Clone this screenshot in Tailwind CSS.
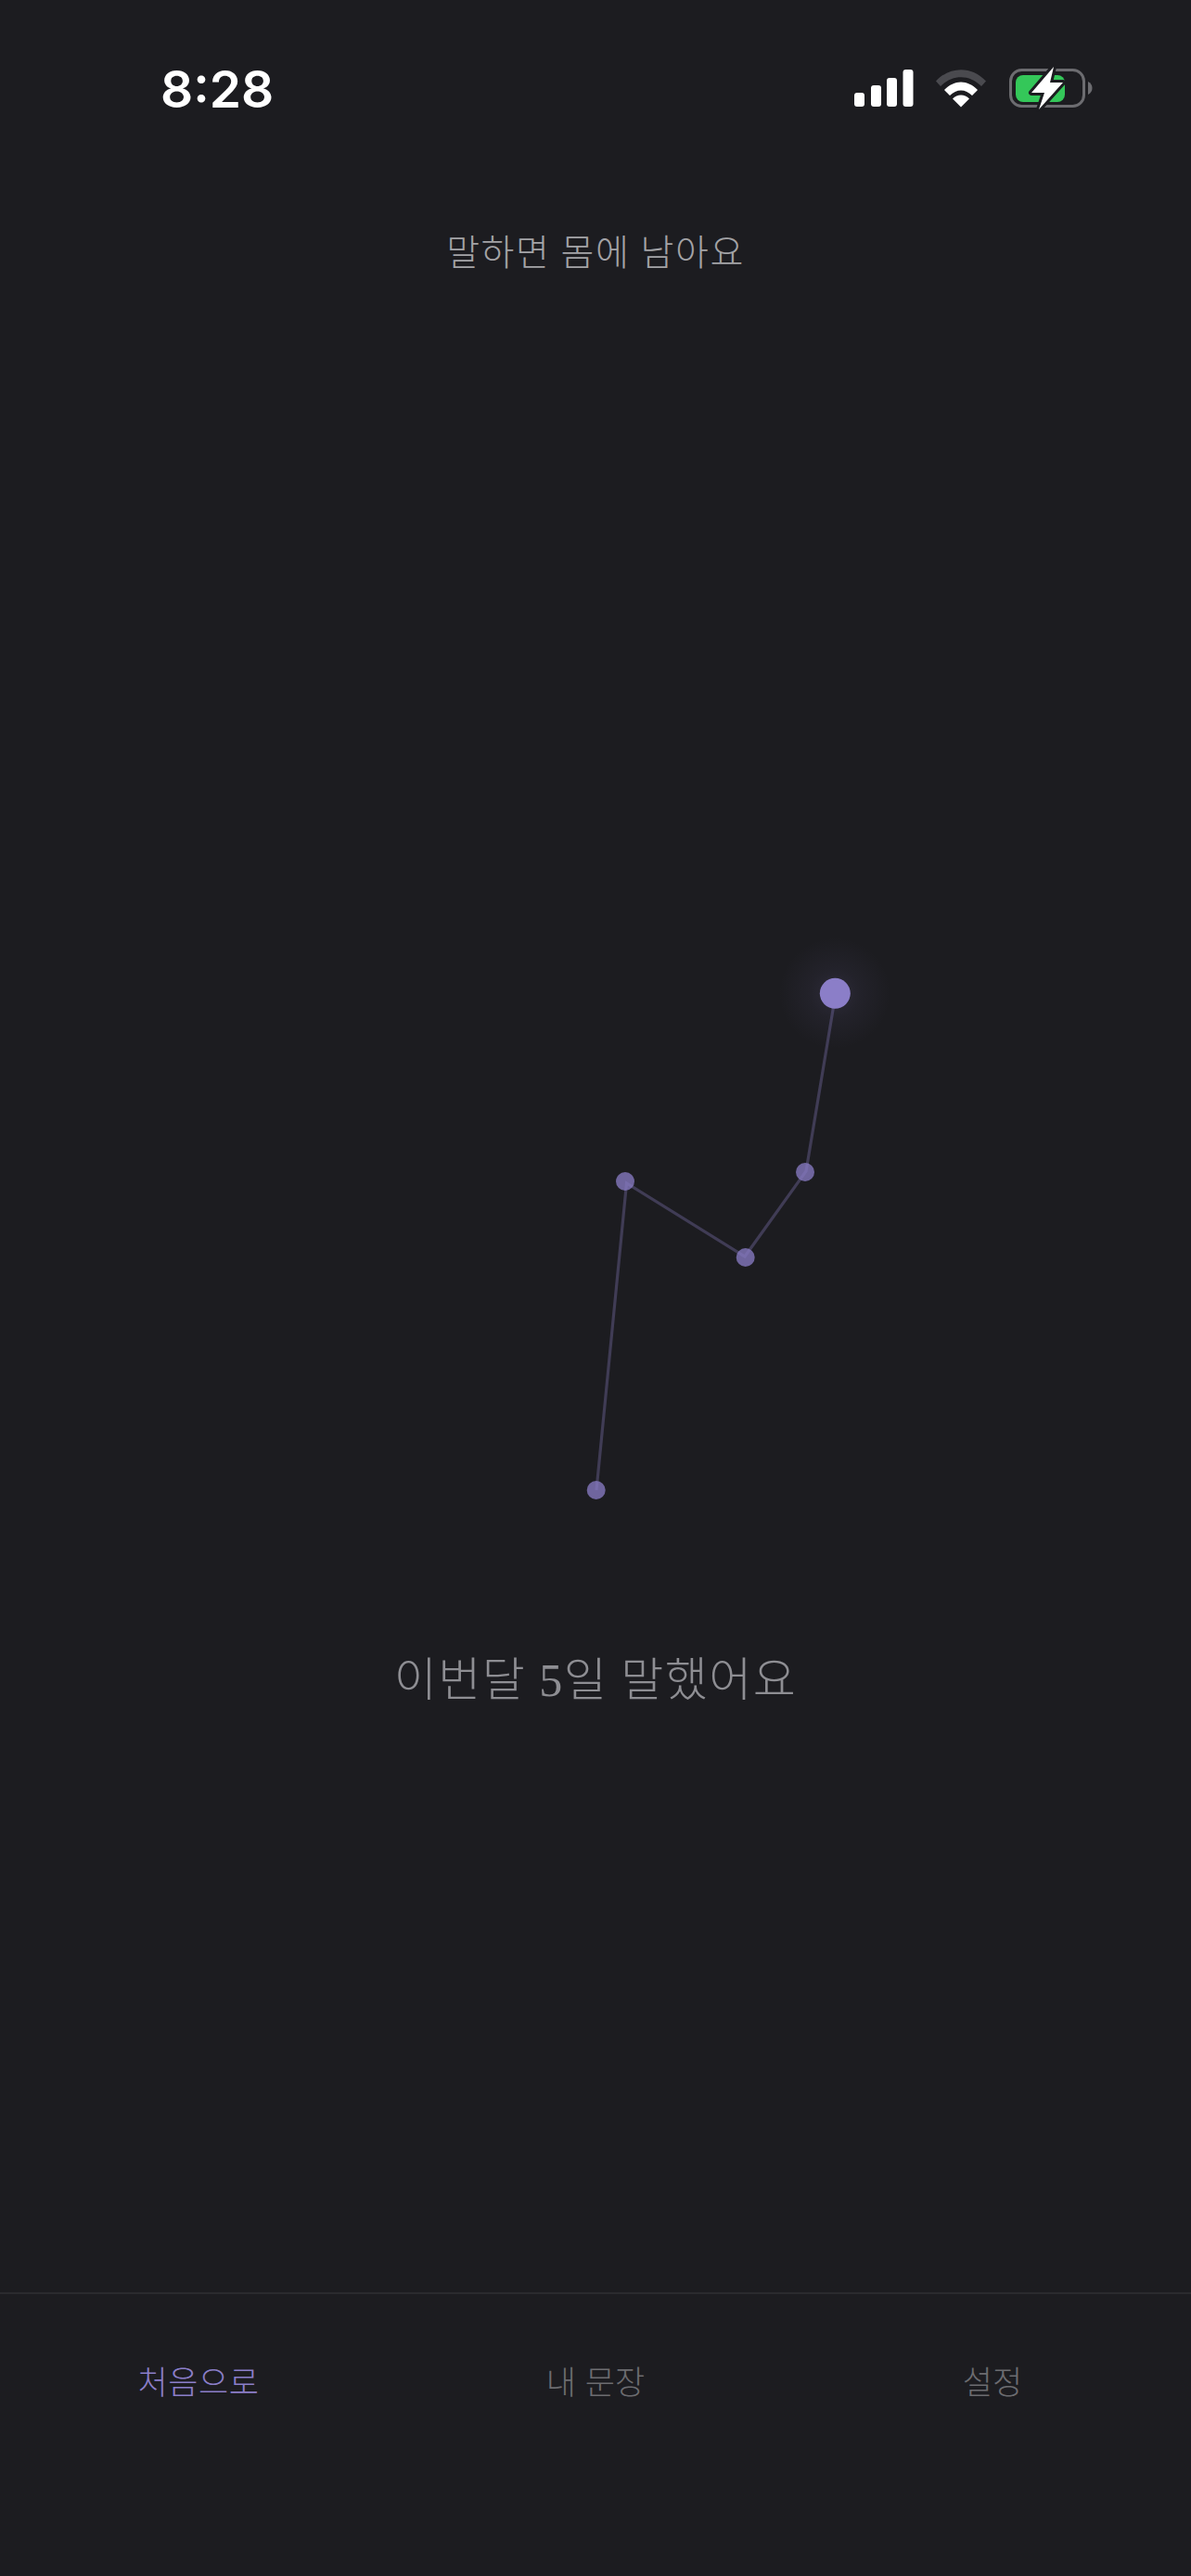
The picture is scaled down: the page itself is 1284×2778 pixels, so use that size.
<!DOCTYPE html>
<html lang="ko">
<head>
  <meta charset="UTF-8">
  <title>말하면 몸에 남아요</title>
  <script src="https://cdn.jsdelivr.net/npm/@tailwindcss/browser@4"></script>
</head>
<body class="bg-[#1c1c20]">
  <div class="w-[1284px] h-[2778px] flex flex-col overflow-hidden font-['Liberation_Serif','Noto_Sans_CJK_KR',serif]">

    <!-- status bar -->
    <header class="h-[190px] shrink-0 relative">
      <span class="absolute left-[173px] top-[61px] text-[55px] leading-[70px] font-semibold text-white font-['Inter',sans-serif]">8:28</span>
      <svg class="absolute left-0 top-0" width="1284" height="190" viewBox="0 0 1284 190" fill="none">
        <rect x="921" y="100" width="11" height="15" rx="3" fill="#fff"/>
        <rect x="939" y="92" width="11" height="23" rx="3" fill="#fff"/>
        <rect x="956" y="84" width="11" height="31" rx="3" fill="#fff"/>
        <rect x="973.5" y="75" width="11" height="40" rx="3" fill="#fff"/>
        <path d="M1009 87.500C1024 71 1048 71 1063 87.500L1058 93C1045 80 1027 80 1014 93Z" fill="#4a4a4f"/>
        <path d="M1018 97C1029 85.500 1043 85.500 1054 97L1048 103C1041 95.500 1031 95.500 1024 103Z" fill="#fff"/>
        <path d="M1027 106.500C1032 101 1040 101 1045 106.500L1036 115.500Z" fill="#fff"/>
        <rect x="1089.500" y="75.500" width="79" height="39" rx="12" stroke="#6c6c70" stroke-width="3"/>
        <path d="M1173 88C1176 89.500 1177.500 92 1177.500 95C1177.500 98 1176 100.500 1173 102Z" fill="#6c6c70"/>
        <rect x="1095" y="81" width="53" height="29" rx="8" fill="#34c759"/>
        <path d="M1136 72L1112 100H1126L1120 118L1146 89H1132Z" fill="#fff" stroke="#1c1c20" stroke-width="6" stroke-linejoin="round" paint-order="stroke"/>
      </svg>
    </header>

    <p class="h-[166px] shrink-0 flex items-center justify-center text-[39px] font-light tracking-[1.500px] text-[#a3a3a6]">말하면 몸에 남아요</p>

    <!-- constellation of spoken days -->
    <svg class="mt-[644px] shrink-0 block" width="1284" height="650" viewBox="0 1000 1284 650" fill="none">
      <defs>
        <radialGradient id="glow">
          <stop offset="0" stop-color="#8b7ec8" stop-opacity="0.15"/>
          <stop offset="0.45" stop-color="#8b7ec8" stop-opacity="0.06"/>
          <stop offset="1" stop-color="#8b7ec8" stop-opacity="0"/>
        </radialGradient>
      </defs>
      <circle cx="900" cy="1071" r="60" fill="url(#glow)"/>
      <polyline points="643,1607 675.500,1276 803,1355 869,1263 901,1071" stroke="#8b7ec8" stroke-opacity="0.32" stroke-width="3.200"/>
      <circle cx="642.700" cy="1607" r="10" fill="#8b7ec8" fill-opacity="0.75"/>
      <circle cx="674" cy="1274" r="10" fill="#8b7ec8" fill-opacity="0.75"/>
      <circle cx="803.700" cy="1356" r="10" fill="#8b7ec8" fill-opacity="0.75"/>
      <circle cx="868" cy="1264" r="10" fill="#8b7ec8" fill-opacity="0.75"/>
      <circle cx="900.300" cy="1071.300" r="16.500" fill="#8b7ec8"/>
    </svg>

    <p class="mt-[122px] h-[80px] shrink-0 flex items-center justify-center text-[50px] font-light tracking-[1.500px] text-[#8e8e93]">이번달 5일 말했어요</p>

    <nav class="mt-auto h-[306px] shrink-0 border-t-2 border-[#2a2a2e] grid grid-cols-3 font-['Noto_Sans_CJK_KR',sans-serif] font-light text-[35px]">
      <a class="h-[186px] flex items-center justify-center tracking-[0.5px] text-[#8b7ec8]">처음으로</a>
      <a class="h-[186px] flex items-center justify-center text-[#6c6c70]">내 문장</a>
      <a class="h-[186px] flex items-center justify-center text-[#6c6c70]">설정</a>
    </nav>
  </div>
</body>
</html>
